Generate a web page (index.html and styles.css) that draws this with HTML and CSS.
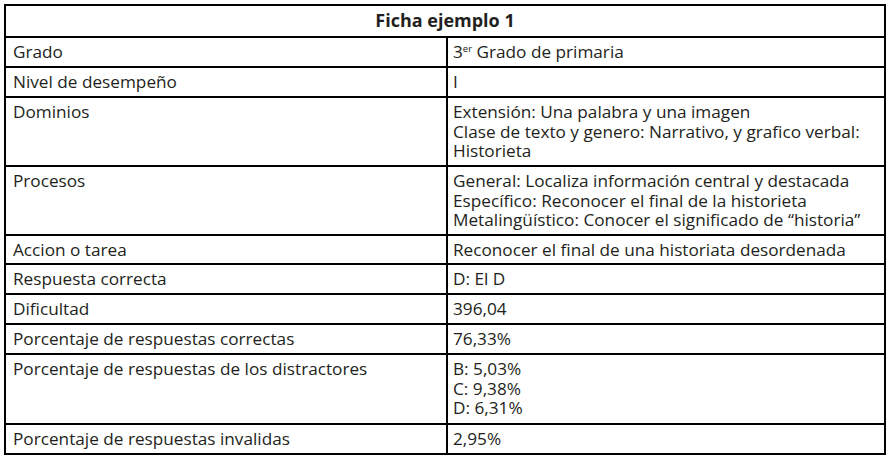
FILE: index.html
```html
<!DOCTYPE html>
<html lang="es">
<head>
<meta charset="utf-8">
<title>Ficha ejemplo 1</title>
<link rel="stylesheet" href="styles.css">
</head>
<body>
<table class="ficha">
  <colgroup>
    <col class="col-label">
    <col class="col-value">
  </colgroup>
  <thead>
    <tr class="head-row"><th colspan="2" class="title">Ficha ejemplo 1</th></tr>
  </thead>
  <tbody>
    <tr class="single"><td>Grado</td><td class="val">3<sup>er</sup> Grado de primaria</td></tr>
    <tr class="single"><td>Nivel de desempeño</td><td class="val">I</td></tr>
    <tr class="multi"><td>Dominios</td><td class="val">Extensión: Una palabra y una imagen<br>Clase de texto y genero: Narrativo, y grafico verbal:<br>Historieta</td></tr>
    <tr class="multi"><td>Procesos</td><td class="val">General: Localiza información central y destacada<br>Específico: Reconocer el final de la historieta<br>Metalingüístico: Conocer el significado de “historia”</td></tr>
    <tr class="single short"><td>Accion o tarea</td><td class="val">Reconocer el final de una historiata desordenada</td></tr>
    <tr class="single"><td>Respuesta correcta</td><td class="val">D: El D</td></tr>
    <tr class="single"><td>Dificultad</td><td class="val">396,04</td></tr>
    <tr class="single"><td>Porcentaje de respuestas correctas</td><td class="val">76,33%</td></tr>
    <tr class="multi tall"><td>Porcentaje de respuestas de los distractores</td><td class="val">B: 5,03%<br>C: 9,38%<br>D: 6,31%</td></tr>
    <tr class="single"><td>Porcentaje de respuestas invalidas</td><td class="val">2,95%</td></tr>
  </tbody>
</table>
</body>
</html>
```
FILE: styles.css
```css
html, body {
  margin: 0;
  padding: 0;
  background: #ffffff;
}
body {
  padding: 4px 0 0 4px;
  font-family: "Open Sans", "Noto Sans", sans-serif;
  color: #231f20;
}
.ficha {
  border-collapse: collapse;
  width: 882px;
  table-layout: fixed;
  font-size: 17.2px;
  line-height: 19.5px;
}
.col-label { width: 442px; }
.col-value { width: 438px; }
.ficha th,
.ficha td {
  border: 2px solid #000;
  text-align: left;
  vertical-align: top;
  padding: 4px 4px 0 7px;
  overflow: hidden;
}
.ficha td.val { padding-left: 5px; }
.head-row { height: 32px; }
.ficha .title {
  text-align: center;
  font-weight: 700;
  font-size: 18px;
  padding: 5px 0 0;
}
.single { height: 30px; }
.short { height: 29px; }
.multi { height: 69px; }
.tall { height: 70px; }
.ficha sup {
  font-size: 9.5px;
  line-height: 0;
  vertical-align: 6px;
}
```
